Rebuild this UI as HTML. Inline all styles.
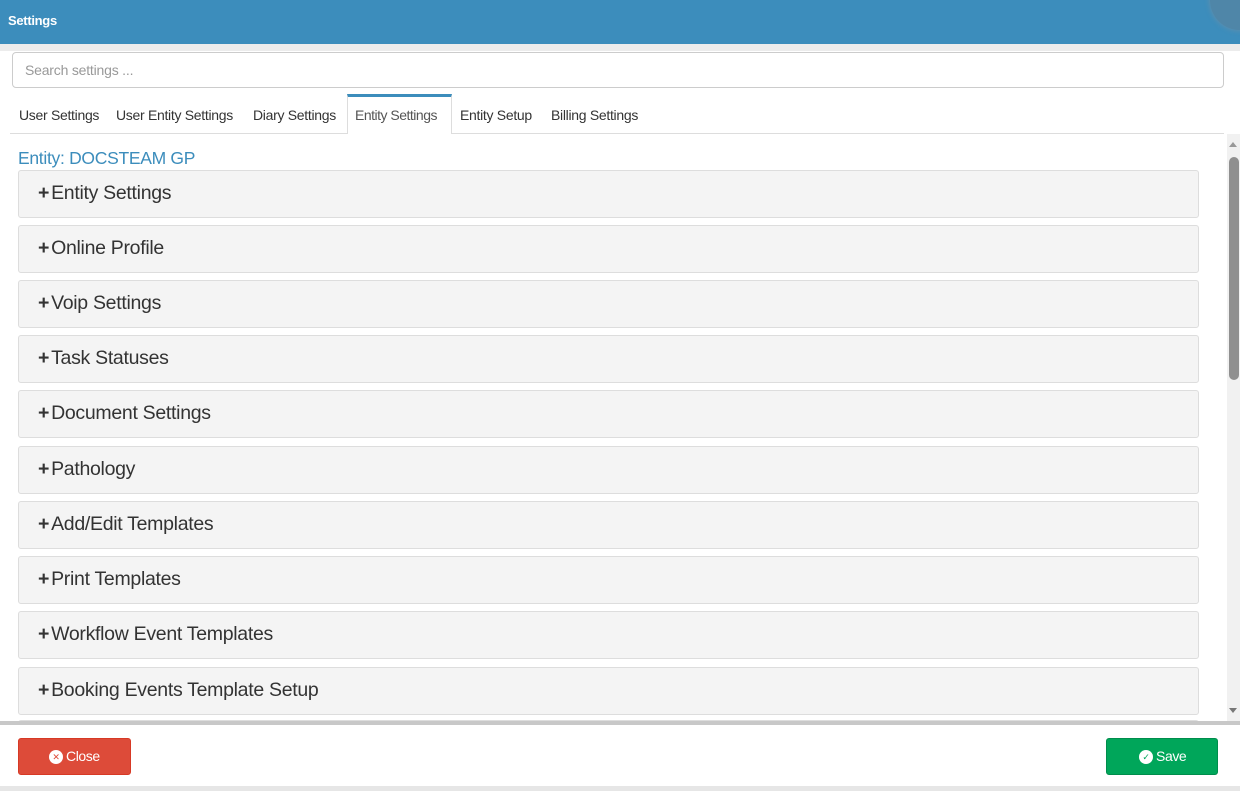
<!DOCTYPE html>
<html><head><style>
*{box-sizing:border-box;margin:0;padding:0}
body{width:1240px;height:791px;overflow:hidden;background:#fff;font-family:"Liberation Sans",sans-serif;position:relative}
.hdr{position:absolute;left:0;top:0;width:1240px;height:44px;background:#3c8dbc;overflow:hidden}
.hdr b{position:absolute;left:8px;top:13px;color:#fff;font-size:13px;letter-spacing:-0.3px}
.hdr i{position:absolute;left:1210px;top:-30px;width:60px;height:60px;border-radius:50%;background:#4f86a8;box-shadow:0 0 6px #6a8fa8}
.band{position:absolute;top:44px;left:0;width:1240px;height:7px;background:#ececec}
.search{position:absolute;left:12px;top:52px;width:1212px;height:36px;border:1px solid #ccc;border-radius:4px;font-size:14px;color:#999;padding:9px 12px;letter-spacing:-0.2px}
.tabs{position:absolute;left:10px;top:94px;width:1214px;height:40px;border-bottom:1px solid #ddd}
.tab{position:absolute;top:13px;font-size:14px;color:#333;letter-spacing:-0.3px;white-space:nowrap}
.act{position:absolute;left:337px;top:0;width:105px;height:40px;border:1px solid #ddd;border-top:3px solid #3c8dbc;border-bottom:none;background:#fff;color:#555;font-size:14px;padding:10px 0 0 7px;letter-spacing:-0.5px;white-space:nowrap}
.ent{position:absolute;left:18px;top:148px;color:#3c8dbc;font-size:17.5px;letter-spacing:-0.3px}
.clip{position:absolute;left:0;top:134px;width:1226px;height:587px;overflow:hidden}
.p{position:absolute;left:18px;width:1181px;height:48px;background:#f4f4f4;border:1px solid #ddd;border-radius:3px;font-size:19.5px;color:#333;padding:11px 0 0 19px;letter-spacing:-0.3px;white-space:nowrap}
.p:before{content:"+";font-weight:bold;margin-right:2px}
.sb{position:absolute;left:1227px;top:134px;width:13px;height:587px;background:#f1f1f1}
.th{position:absolute;left:1229px;top:157px;width:10px;height:223px;border-radius:5px;background:#8f8f8f}
.sep{position:absolute;left:0;top:721px;width:1240px;height:4px;background:#c8c8c8}
.bot{position:absolute;left:0;top:786px;width:1240px;height:5px;background:#e6e6e6}
.btn{position:absolute;top:738px;height:37px;border-radius:3px;color:#fff;font-size:14px;padding:9px 0 0 47px;letter-spacing:-0.4px}
.btn span{position:absolute;left:30px;top:11px;width:14px;height:14px;border-radius:50%;background:#fff;font-size:9px;text-align:center;line-height:14px;padding:0}
</style></head><body>
<div class="hdr"><b>Settings</b><i></i></div>
<div class="band"></div>
<div class="search">Search settings ...</div>
<div class="tabs">
<span class="tab" style="left:9px">User Settings</span>
<span class="tab" style="left:106px">User Entity Settings</span>
<span class="tab" style="left:243px">Diary Settings</span>
<div class="act">Entity Settings</div>
<span class="tab" style="left:450px">Entity Setup</span>
<span class="tab" style="left:541px">Billing Settings</span>
</div>
<div class="ent">Entity: DOCSTEAM GP</div>
<div class="clip">
<div class="p" style="top:36px">Entity Settings</div>
<div class="p" style="top:91px">Online Profile</div>
<div class="p" style="top:146px">Voip Settings</div>
<div class="p" style="top:201px">Task Statuses</div>
<div class="p" style="top:256px">Document Settings</div>
<div class="p" style="top:312px">Pathology</div>
<div class="p" style="top:367px">Add/Edit Templates</div>
<div class="p" style="top:422px">Print Templates</div>
<div class="p" style="top:477px">Workflow Event Templates</div>
<div class="p" style="top:533px">Booking Events Template Setup</div>
<div class="p" style="top:586px"></div>
</div>
<div class="sb"><div style="position:absolute;left:2px;top:8px;border:4px solid transparent;border-bottom:5px solid #999;border-top:none;width:0"></div><div style="position:absolute;left:2px;top:574px;border:4px solid transparent;border-top:5px solid #777;border-bottom:none;width:0"></div></div>
<div class="th"></div>
<div class="sep"></div>
<div class="bot"></div>
<div class="btn" style="left:18px;width:113px;background:#dd4b39;border:1px solid #d73925"><span style="color:#dd4b39">✕</span>Close</div>
<div class="btn" style="left:1106px;width:112px;background:#00a65a;border:1px solid #008d4c;padding-left:49px"><span style="left:32px;color:#00a65a">✓</span>Save</div>
</body></html>
